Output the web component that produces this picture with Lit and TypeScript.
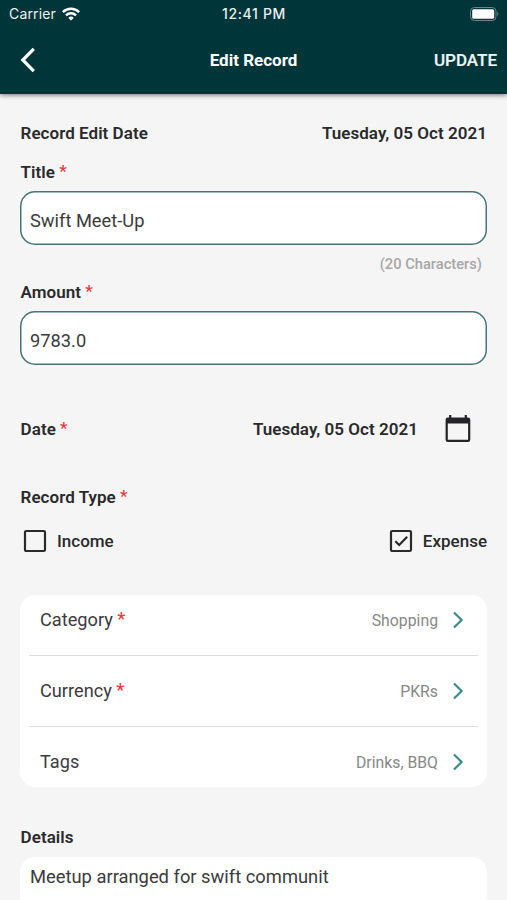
import { LitElement, html, svg, css } from "lit";
import { customElement } from "lit/decorators.js";

const star = html`<span class="star">*</span>`;
const rows = [
  { label: "Category", required: true, value: "Shopping" },
  { label: "Currency", required: true, value: "PKRs" },
  { label: "Tags", required: false, value: "Drinks, BBQ" },
];

@customElement("app-root")
export class AppRoot extends LitElement {
  static styles = css`
    :host {
      display: block;
      height: 900px;
      overflow: hidden;
      background: #f5f5f5;
      color: #2a2a2c;
      font-family: Roboto, "Liberation Sans", sans-serif;
      font-size: 17px;
      line-height: 20px;
      white-space: nowrap;
    }
    * { box-sizing: border-box; }
    svg { display: block; flex: none; }
    header {
      height: 94px;
      background: #003539;
      color: #fff;
      box-shadow: 0 1px 5px rgba(0, 0, 0, 0.55);
      position: relative;
    }
    .status, .nav {
      display: grid;
      grid-template-columns: 1fr auto 1fr;
      align-items: center;
    }
    .status {
      height: 27px;
      padding: 0 8px 0 9px;
      font-family: Inter, sans-serif;
      font-size: 14px;
      color: #e9f0f0;
    }
    .carrier { display: flex; align-items: center; gap: 6px; letter-spacing: 0.15px; }
    .time { font-weight: 500; font-size: 14px; letter-spacing: 0.65px; }
    .end { justify-self: end; }
    .battery { margin-right: -1px; }
    .nav { height: 66px; padding: 0 10px; }
    .back { margin-left: 10px; }
    .heading { font-weight: 700; font-size: 17px; padding-bottom: 1px; }
    .update { font-weight: 500; font-size: 17px; color: #edf7f8; padding-bottom: 1px; -webkit-text-stroke: 0.2px #edf7f8; }
    main { padding: 29px 20px 0 20px; }
    .line { display: flex; justify-content: space-between; align-items: center; height: 20px; }
    .strong { font-weight: 600; letter-spacing: 0.04px; padding-left: 0.6px; }
    .star { color: #e33b3f; font-weight: 500; position: relative; top: -1px; }
    .title-label { margin-top: 19px; }
    .field {
      margin-top: 9px;
      height: 54px;
      padding: 6px 10px 0;
      display: flex;
      align-items: center;
      background: #fff;
      box-shadow: inset 0 0 0 1.5px #477477;
      border-radius: 15px;
      font-size: 18.3px;
      color: #3b3b3d;
    }
    .hint {
      margin-top: 9px;
      padding-right: 5px;
      text-align: right;
      font-size: 14.7px;
      font-weight: 500;
      color: #a7a7a7;
    }
    .amount-label { margin-top: 8px; }
    .date { margin-top: 49px; height: 30px; }
    .picked { display: flex; align-items: center; gap: 24px; padding-right: 13px; }
    .calendar { margin-top: -1px; }
    .type-label { margin-top: 43px; }
    .options { margin-top: 22px; height: 24px; font-weight: 500; }
    .option { display: flex; align-items: center; gap: 10px; padding-left: 3px; }
    .card { margin-top: 42px; height: 192px; padding: 0 9px; background: #fff; border-radius: 15px; }
    .row {
      height: 71px;
      display: flex;
      align-items: center;
      padding: 0 14px 0 11px;
      border-bottom: 1px solid #dfdfdf;
      font-size: 18.2px;
      color: #3b3b3d;
    }
    .row:first-child { height: 61px; padding-bottom: 10px; }
    .row:last-child { height: 60px; padding-top: 10px; border: 0; }
    .value { margin-left: auto; margin-right: 14px; padding-top: 1px; font-size: 15.8px; color: #888; }
    .details-label { margin-top: 40px; }
    .details {
      margin-top: 10px;
      height: 80px;
      padding: 10px;
      background: #fff;
      border-radius: 15px;
      font-size: 18.35px;
      color: #3b3b3d;
    }
  `;

  private box(checked: boolean) {
    return svg`<svg width="24" height="24" viewBox="0 0 24 24" fill="none" stroke="#2a2a2c" stroke-width="2.2">
      <rect x="2" y="2" width="20" height="20" rx="1.3"/>
      ${checked ? svg`<path d="M6.3 12.3 10.2 16 18.2 7.8"/>` : ""}
    </svg>`;
  }

  render() {
    return html`
      <header>
        <div class="status">
          <span class="carrier">Carrier
            <svg width="18" height="14" viewBox="0 0 18 14" fill="none" stroke="#fff" stroke-width="2.5">
              <path d="M.9 5.1a11.6 11.6 0 0 1 16.2 0"/>
              <path d="M4 8.3a7.2 7.2 0 0 1 10 0"/>
              <path d="M9 13.6 6.3 10.9a3.8 3.8 0 0 1 5.4 0Z" fill="#fff" stroke="none"/>
            </svg>
          </span>
          <span class="time">12:41 PM</span>
          <svg class="end battery" width="30" height="14" viewBox="0 0 30 14">
            <rect x=".5" y=".5" width="25.5" height="13" rx="3.8" fill="none" stroke="#668689"/>
            <rect x="2.2" y="2.2" width="22" height="9.6" rx="1.6" fill="#fff"/>
            <path d="M27.3 4.8q2.2 2.2 0 4.4Z" fill="#668689"/>
          </svg>
        </div>
        <div class="nav">
          <svg class="back" width="16" height="26" viewBox="0 0 16 26" fill="none" stroke="#fff" stroke-width="3.2">
            <path d="M13.8 1.9 2.8 13l11 11.1"/>
          </svg>
          <span class="heading">Edit Record</span>
          <span class="update end">UPDATE</span>
        </div>
      </header>
      <main>
        <div class="line strong"><span>Record Edit Date</span><span>Tuesday, 05 Oct 2021</span></div>
        <div class="line strong title-label"><span>Title ${star}</span></div>
        <div class="field">Swift Meet-Up</div>
        <div class="hint">(20 Characters)</div>
        <div class="line strong amount-label"><span>Amount ${star}</span></div>
        <div class="field">9783.0</div>
        <div class="line strong date">
          <span>Date ${star}</span>
          <span class="picked">Tuesday, 05 Oct 2021
            <svg class="calendar" width="32" height="30" viewBox="0 0 32 30">
              <path fill="#242426" fill-rule="evenodd" d="M7.1 1h2.2v2.5h13.4V1h2.2v2.5h1.1a2.3 2.3 0 0 1 2.3 2.3v19.9a2.3 2.3 0 0 1-2.3 2.3H5.9a2.3 2.3 0 0 1-2.3-2.3V5.8a2.3 2.3 0 0 1 2.3-2.3h1.2ZM5.8 9.5v16.3h20.3V9.5Z"/>
            </svg>
          </span>
        </div>
        <div class="line strong type-label"><span>Record Type ${star}</span></div>
        <div class="line options">
          <span class="option">${this.box(false)}Income</span>
          <span class="option">${this.box(true)}Expense</span>
        </div>
        <div class="card">
          ${rows.map((r) => html`
            <div class="row">
              <span>${r.label} ${r.required ? star : ""}</span>
              <span class="value">${r.value}</span>
              <svg width="12" height="18" viewBox="0 0 12 18" fill="none" stroke="#3c8a8b" stroke-width="2.2">
                <path d="M2 1.5 9.6 9 2 16.5"/>
              </svg>
            </div>`)}
        </div>
        <div class="line strong details-label">Details</div>
        <div class="details">Meetup arranged for swift communit</div>
      </main>
    `;
  }
}
